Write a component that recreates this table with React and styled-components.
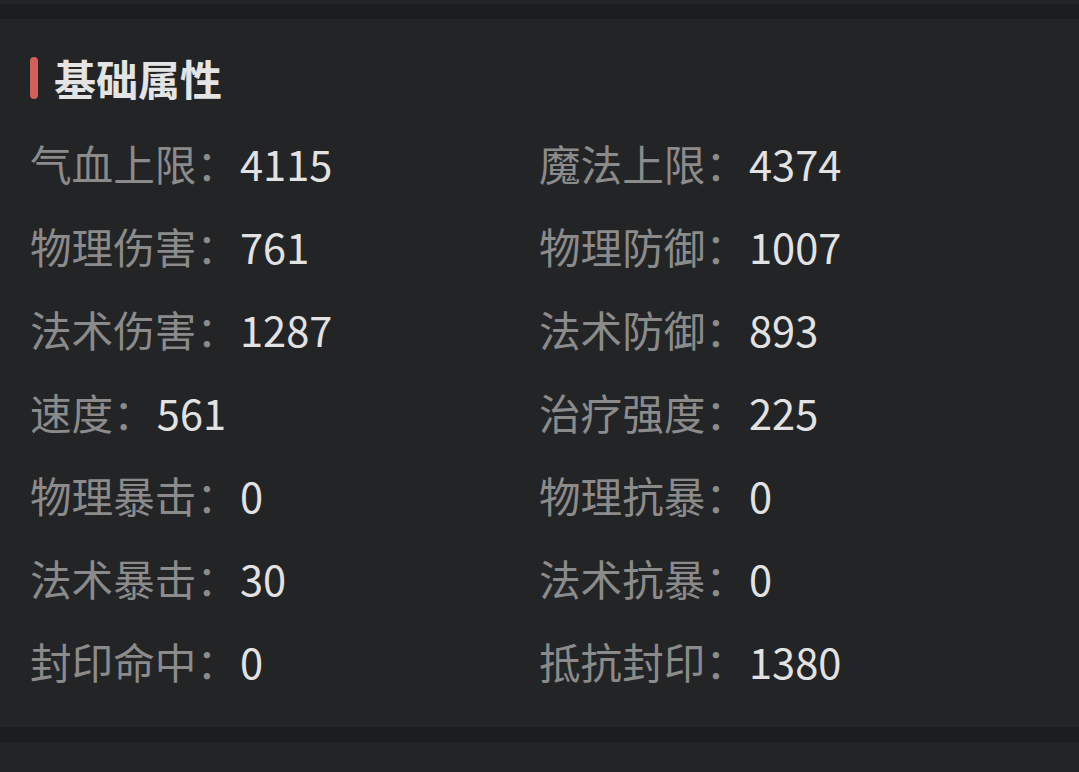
import React from "react"
import styled, { createGlobalStyle } from "styled-components"

const GlobalStyle = createGlobalStyle`
	html, body {
		margin: 0;
		padding: 0;
		background: #232426;
	}
	body {
		font-family: "Noto Sans CJK SC", "Noto Sans", sans-serif;
	}
`

const Page = styled.div`
	display: flex;
	flex-direction: column;
	padding-top: 4px;
	background: #232426;
	min-height: 772px;
`

const Divider = styled.div`
	height: 15px;
	background: #1b1d1e;
`

const Panel = styled.section`
	display: flex;
	flex-direction: column;
	padding: 37px 30px 25px 30px;
	background: #232426;
`

const Header = styled.div`
	display: flex;
	flex-direction: row;
	align-items: center;
	gap: 16px;
	height: 44px;
	margin-bottom: 21px;
`

const Bar = styled.span`
	width: 8px;
	height: 42px;
	border-radius: 4px;
	background: #d35f5b;
`

const Title = styled.h2`
	margin: 0;
	font-size: 42px;
	font-weight: 700;
	line-height: 44px;
	color: #e4e4e5;
`

const Grid = styled.div`
	display: grid;
	grid-template-columns: 509px 1fr;
`

const Stat = styled.div`
	display: flex;
	flex-direction: row;
	align-items: center;
	height: 83px;
	font-size: 41.6px;
	white-space: nowrap;
`

const Label = styled.span`
	color: #8b8b8b;
`

const Value = styled.span`
	margin-left: 2px;
	color: #e2e2e3;
`

const stats = [
	["气血上限", "4115"], ["魔法上限", "4374"],
	["物理伤害", "761"], ["物理防御", "1007"],
	["法术伤害", "1287"], ["法术防御", "893"],
	["速度", "561"], ["治疗强度", "225"],
	["物理暴击", "0"], ["物理抗暴", "0"],
	["法术暴击", "30"], ["法术抗暴", "0"],
	["封印命中", "0"], ["抵抗封印", "1380"],
]

export default function App() {
	return (
		<Page>
			<GlobalStyle />
			<Divider />
			<Panel>
				<Header>
					<Bar />
					<Title>基础属性</Title>
				</Header>
				<Grid>
					{stats.map(([label, value]) => (
						<Stat key={label}>
							<Label>{label}：</Label>
							<Value>{value}</Value>
						</Stat>
					))}
				</Grid>
			</Panel>
			<Divider />
		</Page>
	)
}
